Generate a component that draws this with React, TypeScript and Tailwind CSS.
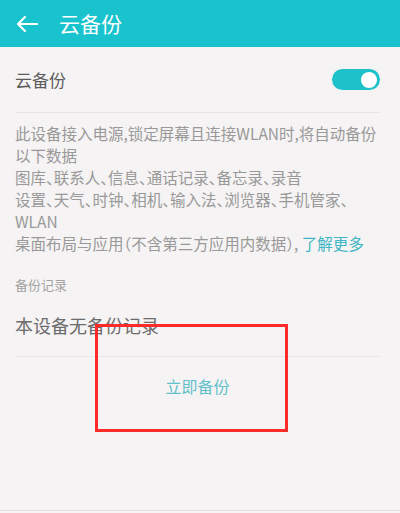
import React from 'react'

function BackArrow() {
  return (
    <svg width="22" height="18" viewBox="0 0 22 18" fill="none" className="shrink-0">
      <path d="M21 9H2M9 2L2 9l7 7" stroke="#ffffff" strokeWidth="2.2" strokeLinecap="round" strokeLinejoin="round" />
    </svg>
  )
}

function Toggle() {
  return (
    <div className="w-[48px] h-[21px] rounded-full bg-[#1cc1ca] flex items-center justify-end pr-[3px]">
      <div className="w-[16px] h-[16px] rounded-full bg-white" />
    </div>
  )
}

const lines = [
  '此设备接入电源,锁定屏幕且连接WLAN时,将自动备份',
  '以下数据',
  '图库、联系人、信息、通话记录、备忘录、录音',
  '设置、天气、时钟、相机、输入法、浏览器、手机管家、',
  'WLAN',
]

export default function App() {
  return (
    <div className="relative w-[400px] h-[513px] overflow-hidden bg-[#f5f3f3] font-['Noto_Sans_CJK_SC','Noto_Sans',sans-serif] [font-feature-settings:'halt']">
      {/* Top bar */}
      <div className="h-[47px] bg-[#19c3cd] flex items-center pl-[16px]">
        <BackArrow />
        <span className="ml-[21px] text-[21px] leading-none text-white">云备份</span>
      </div>

      <div className="pl-[15px] pr-[20px]">
        <div className="h-[66px] flex items-center justify-between border-b border-[#e6e4e4]">
          <span className="text-[17px] text-[#5c5c5c]">云备份</span>
          <Toggle />
        </div>

        <div className="pt-[9px] text-[15.5px] leading-[22px] text-[#999999]">
          {lines.map((l) => (
            <div key={l} className="whitespace-nowrap">{l}</div>
          ))}
          <div className="whitespace-nowrap">
            桌面布局与应用（不含第三方应用内数据）, <span className="text-[#3fb5c5]">了解更多</span>
          </div>
        </div>

        <div className="pt-[21px] text-[13px] leading-[20px] text-[#a3a3a3]">备份记录</div>

        <div className="h-[62px] flex items-center border-b border-[#e8e6e6]">
          <span className="text-[18px] text-[#6c6c6c]">本设备无备份记录</span>
        </div>

        <div className="h-[58px] flex items-center justify-center">
          <span className="text-[16px] text-[#62c0cc]">立即备份</span>
        </div>
      </div>

      {/* annotation box */}
      <div className="absolute left-[95px] top-[324px] w-[193px] h-[108px] border-[3px] border-[#ff2b2b]" />
      <div className="absolute left-0 right-0 bottom-[2px] h-px bg-[#e2e0e0]" />
    </div>
  )
}
